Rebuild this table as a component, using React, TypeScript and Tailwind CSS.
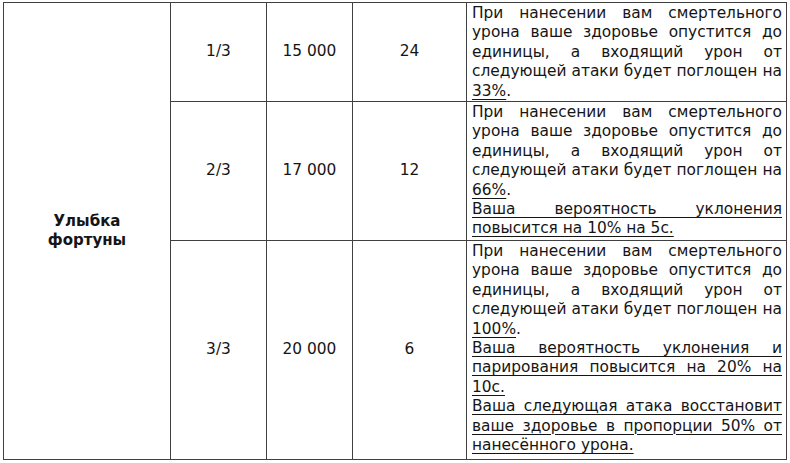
import React from "react";

const U = ({ children }: { children: React.ReactNode }) => (
  <span className="underline decoration-1 underline-offset-[3px]">{children}</span>
);

const P = ({ children }: { children: React.ReactNode }) => (
  <p className="text-justify [text-align-last:left]">{children}</p>
);

const base =
  "При нанесении вам смертельного урона ваше здоровье опустится до единицы, а входящий урон от следующей атаки будет поглощен на ";

export default function App() {
  const td = "border border-[#404040] p-0";
  return (
    <div className="w-[790px] h-[463px] bg-white pt-[2px] pl-[3px] overflow-hidden">
      <table
        className="table-fixed border-collapse text-[#151515] text-[15.4px] leading-[19.4px]"
        style={{ fontFamily: '"DejaVu Sans", Verdana, sans-serif', width: 783 }}
      >
        <colgroup>
          <col className="w-[167px]" />
          <col className="w-[96px]" />
          <col className="w-[86px]" />
          <col className="w-[114px]" />
          <col className="w-[320px]" />
        </colgroup>
        <tbody>
          <tr className="h-[99px]">
            <td rowSpan={3} className={`${td} text-center align-middle font-bold text-[15px]`}>
              Улыбка
              <br />
              фортуны
            </td>
            <td className={`${td} text-center align-middle`}>1/3</td>
            <td className={`${td} text-center align-middle`}>15 000</td>
            <td className={`${td} text-center align-middle`}>24</td>
            <td className={`${td} align-top pl-[5px] pr-[4px] pt-[1px]`}>
              <P>
                {base}
                <U>33%</U>.
              </P>
            </td>
          </tr>
          <tr className="h-[139px]">
            <td className={`${td} text-center align-middle`}>2/3</td>
            <td className={`${td} text-center align-middle`}>17 000</td>
            <td className={`${td} text-center align-middle`}>12</td>
            <td className={`${td} align-top pl-[5px] pr-[4px] pt-[1px]`}>
              <P>
                {base}
                <U>66%</U>.
              </P>
              <P>
                <U>Ваша вероятность уклонения повысится на 10% на 5с.</U>
              </P>
            </td>
          </tr>
          <tr className="h-[219px]">
            <td className={`${td} text-center align-middle`}>3/3</td>
            <td className={`${td} text-center align-middle`}>20 000</td>
            <td className={`${td} text-center align-middle`}>6</td>
            <td className={`${td} align-top pl-[5px] pr-[4px] pt-[1px]`}>
              <P>
                {base}
                <U>100%</U>.
              </P>
              <P>
                <U>Ваша вероятность уклонения и парирования повысится на 20% на 10с.</U>
              </P>
              <P>
                <U>Ваша следующая атака восстановит ваше здоровье в пропорции 50% от нанесённого урона.</U>
              </P>
            </td>
          </tr>
        </tbody>
      </table>
    </div>
  );
}
